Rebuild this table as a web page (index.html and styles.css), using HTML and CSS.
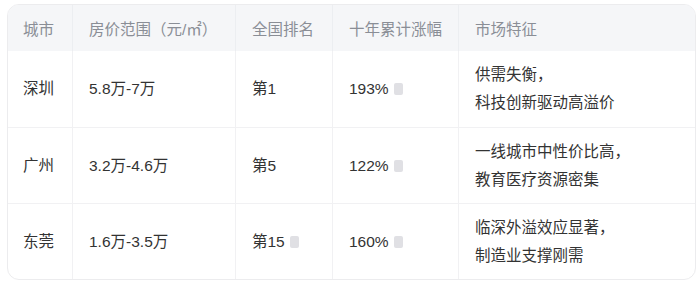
FILE: index.html
```html
<!DOCTYPE html>
<html lang="zh">
<head>
<meta charset="utf-8">
<link rel="stylesheet" href="styles.css">
</head>
<body>
<div class="wrap">
  <table class="tbl">
    <colgroup>
      <col class="c1"><col class="c2"><col class="c3"><col class="c4"><col class="c5">
    </colgroup>
    <thead>
      <tr><th>城市</th><th>房价范围（元/㎡）</th><th>全国排名</th><th>十年累计涨幅</th><th>市场特征</th></tr>
    </thead>
    <tbody>
      <tr><td>深圳</td><td>5.8万-7万</td><td>第1</td><td>193%<span class="cite"></span></td><td>供需失衡，<br>科技创新驱动高溢价</td></tr>
      <tr><td>广州</td><td>3.2万-4.6万</td><td>第5</td><td>122%<span class="cite"></span></td><td>一线城市中性价比高，<br>教育医疗资源密集</td></tr>
      <tr><td>东莞</td><td>1.6万-3.5万</td><td>第15<span class="cite"></span></td><td>160%<span class="cite"></span></td><td>临深外溢效应显著，<br>制造业支撑刚需</td></tr>
    </tbody>
  </table>
</div>
</body>
</html>
```
FILE: styles.css
```css
html, body { margin: 0; padding: 0; background: #fff; }
body { font-family: "Liberation Sans", "Noto Sans CJK SC", sans-serif; }
.wrap {
  padding: 4px 6px 0 7px;
}
.tbl {
  width: 687px;
  border-collapse: separate;
  border-spacing: 0;
  table-layout: fixed;
  border: 1px solid #ececee;
  border-radius: 12px;
  overflow: hidden;
  font-size: 15.5px;
  color: #333;
}
.c1 { width: 64px; }
.c2 { width: 163px; }
.c3 { width: 97px; }
.c4 { width: 126px; }
.c5 { width: 237px; }
.tbl th {
  background: #f5f6f8;
  color: #8a8e96;
  font-weight: normal;
  text-align: left;
  height: 46px;
  padding: 0 16px;
  border-left: 1px solid #eceef1;
  box-sizing: border-box;
}
.tbl td {
  height: 76px;
  padding: 0 16px;
  line-height: 28px;
  border-left: 1px solid #f1f1f3;
  border-top: 1px solid #f1f1f3;
  box-sizing: border-box;
  vertical-align: middle;
}
.tbl th:first-child, .tbl td:first-child { border-left: none; }
.tbl tbody tr:first-child td { border-top: none; }
.tbl td:first-child, .tbl th:first-child { padding-left: 15px; }
.cite {
  display: inline-block;
  width: 9px;
  height: 12px;
  margin-left: 5px;
  background: #e0e0e4;
  border-radius: 2px;
  vertical-align: -1px;
  filter: blur(0.4px);
}
```
